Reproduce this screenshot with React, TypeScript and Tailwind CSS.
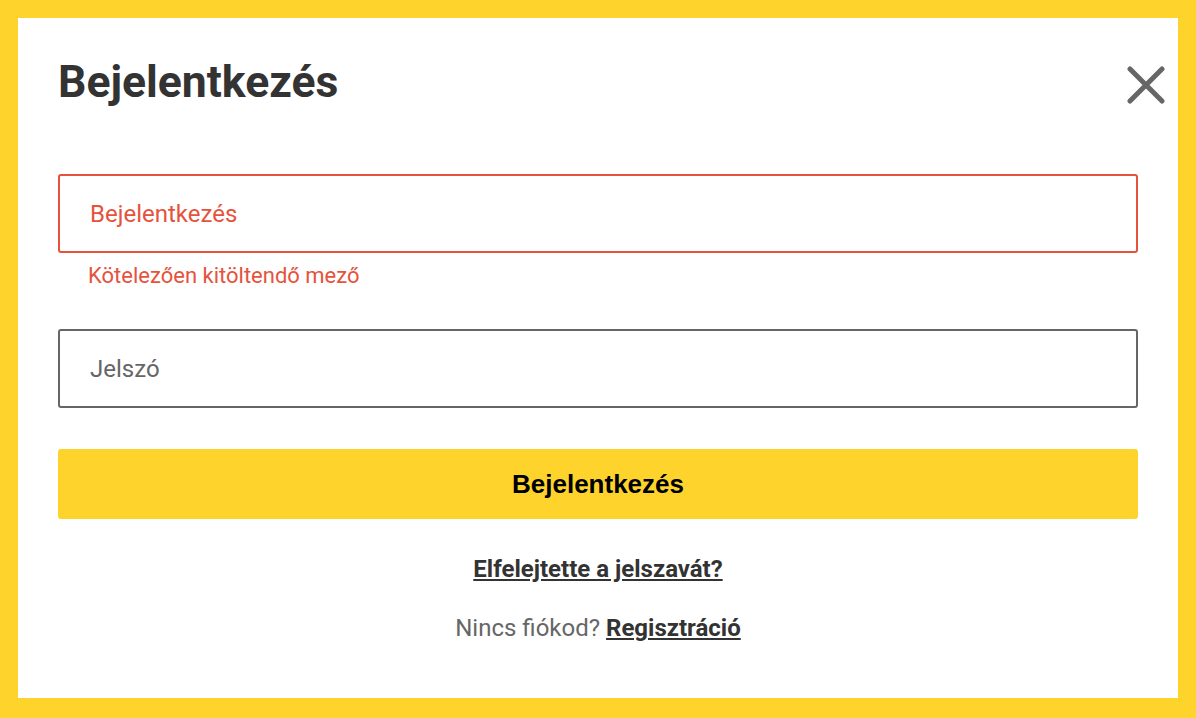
import { useState } from "react"

const Login = () => {
  const [login, setLogin] = useState("")
  const [password, setPassword] = useState("")

  return (
    <div className="min-h-[718px] w-full bg-[#fed42c] p-[18px] font-['Roboto',sans-serif]">
      <div className="h-[680px] bg-white px-[40px] pt-[38px]">
        <div className="flex items-start justify-between">
          <h2 className="text-[44.5px] font-bold leading-[52px] text-[#333333]">Bejelentkezés</h2>
          <button className="-mr-[28px] mt-[9px] flex h-[40px] w-[40px] items-center justify-center" aria-label="close">
            <svg width="38" height="38" viewBox="0 0 38 38">
              <path d="M3 3 L35 35 M35 3 L3 35" stroke="#666666" strokeWidth="5" strokeLinecap="round" />
            </svg>
          </button>
        </div>

        <form className="mt-[66px] flex flex-col" onSubmit={(e) => e.preventDefault()}>
          <input
            className="h-[79px] w-full rounded-[3px] border-2 border-[#e5533d] px-[30px] text-[24px] text-[#333333] placeholder:text-[#e5533d] focus:outline-none"
            value={login}
            onChange={(e) => setLogin(e.target.value)}
            placeholder="Bejelentkezés"
            type="text"
          />
          <p className="mt-[8px] pl-[30px] text-[22px] leading-[30px] text-[#e5533d]">Kötelezően kitöltendő mező</p>
          <input
            className="mt-[38px] h-[79px] w-full rounded-[3px] border-2 border-[#666666] px-[30px] text-[24px] text-[#333333] placeholder:text-[#666666] focus:outline-none"
            value={password}
            onChange={(e) => setPassword(e.target.value)}
            placeholder="Jelszó"
            type="password"
          />
          <button className="mt-[41px] h-[70px] w-full rounded-[3px] bg-[#fed42c] font-['Liberation_Sans',Arial,sans-serif] text-[26px] font-bold text-black">
            Bejelentkezés
          </button>
        </form>

        <div className="mt-[36px] flex flex-col items-center gap-[31px] text-[24px] leading-[28px]">
          <a href="#" className="font-bold text-[#333333] underline underline-offset-2">Elfelejtette a jelszavát?</a>
          <p className="text-[#666666]">
            Nincs fiókod?{" "}
            <a href="#" className="font-bold text-[#333333] underline underline-offset-2">Regisztráció</a>
          </p>
        </div>
      </div>
    </div>
  )
}

export default Login
